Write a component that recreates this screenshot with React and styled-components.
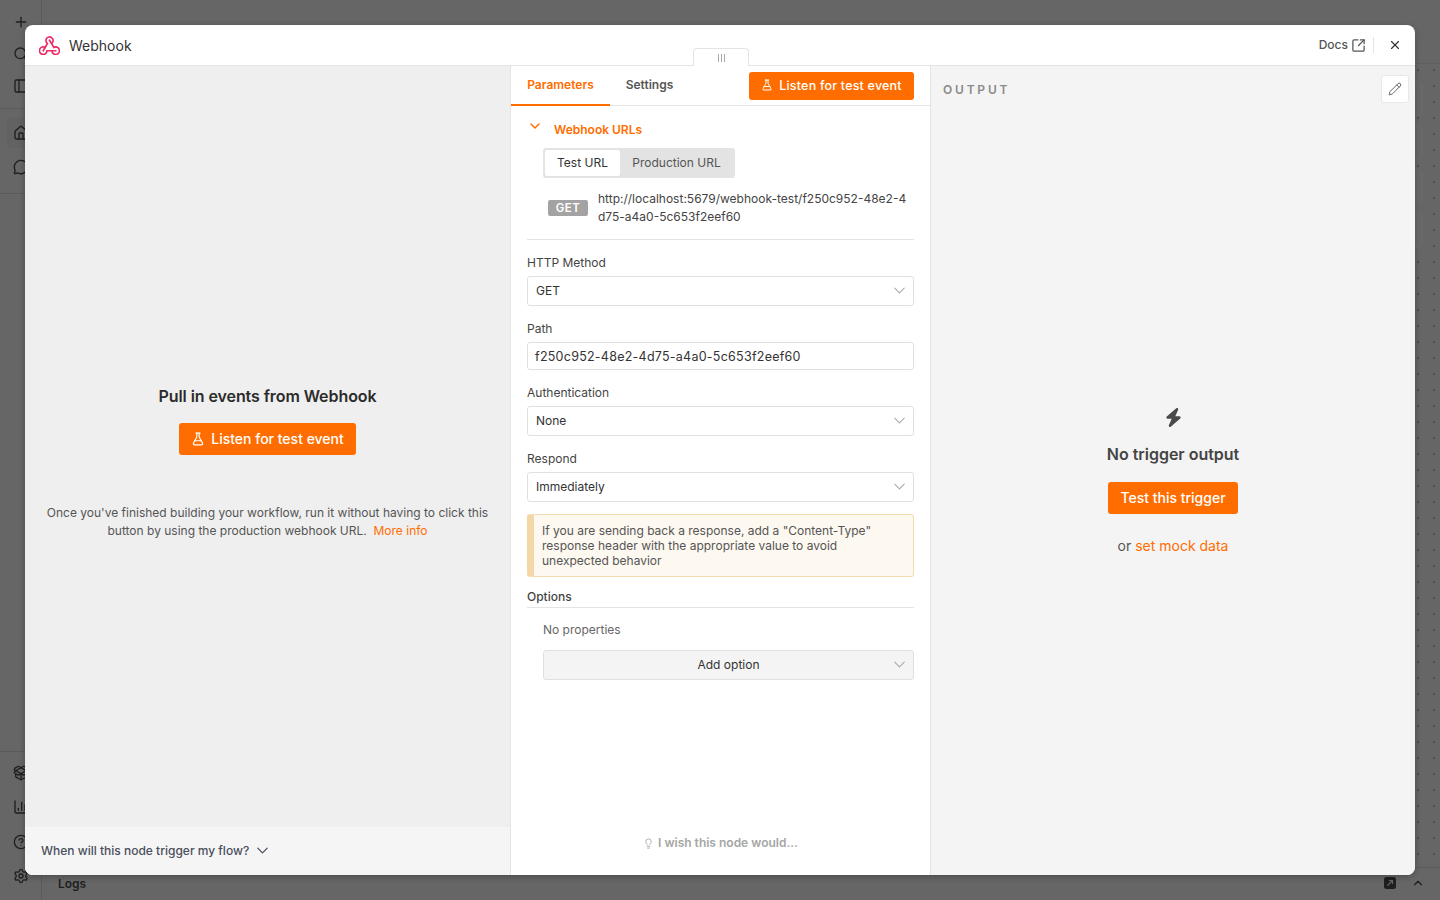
import React from 'react';
import styled, { createGlobalStyle } from 'styled-components';
import {
  FlaskConical, SquareArrowOutUpRight, X, Pencil, ChevronDown, ChevronUp, Lightbulb,
  Plus, Search, PanelLeft, House, MessageCircle, PackageOpen, ChartColumn, CircleHelp, Settings,
} from 'lucide-react';
import { FaBolt } from 'react-icons/fa6';

const GlobalStyle = createGlobalStyle`
  * { box-sizing: border-box; }
  html, body { margin: 0; height: 100%; }
  body { font-family: Inter, "Liberation Sans", sans-serif; background: #666; color: #333; overflow: hidden; }
`;

const ORANGE = '#ff6d00';

const Page = styled.div`
  width: 1440px;
  height: 900px;
  display: flex;
  background: #666;
  position: relative;
  overflow: hidden;
`;

const Sidebar = styled.div`
  width: 42px;
  display: flex;
  flex-direction: column;
  border-right: 1px solid #5a5a5a;
  color: #1f1f1f;
`;

const SideGroup = styled.div`
  display: flex;
  flex-direction: column;
  align-items: center;
  gap: ${p => p.$gap || 16}px;
  padding: ${p => p.$pad || '0'};
  border-bottom: ${p => p.$line ? '1px solid #5a5a5a' : 'none'};
  border-top: ${p => p.$lineTop ? '1px solid #5a5a5a' : 'none'};
`;

const HomeItem = styled.div`
  width: 28px;
  height: 31px;
  margin: -8px 0;
  display: flex;
  align-items: center;
  justify-content: center;
  border-radius: 4px;
  background: #626262;
`;

const Spacer = styled.div`
  flex: 1;
`;

const Canvas = styled.div`
  flex: 1;
  display: flex;
  flex-direction: column;
`;

const TopBar = styled.div`
  height: 64px;
  flex: none;
  border-bottom: 1px solid #5f5f5f;
`;

const CanvasDots = styled.div`
  flex: 1;
  display: flex;
  flex-direction: column;
  align-items: flex-end;
  gap: 9px;
  padding: 17px 17px 0 0;
  background-image: radial-gradient(#4f4f4f 0.8px, transparent 1px);
  background-size: 16px 16px;
  background-position: -8px -2px;
`;

const GhostCard = styled.div`
  width: 40px;
  height: 35px;
  border-radius: 6px;
  background: #686868;
  border: 1px solid #6c6c6c;
`;

const LogsBar = styled.div`
  height: 33px;
  flex: none;
  display: flex;
  align-items: center;
  justify-content: space-between;
  padding: 0 15px 2px 16px;
  border-top: 1px solid #5a5a5a;
  font-size: 12px;
  font-weight: 600;
  color: #1f1f1f;
`;

const LogsActions = styled.div`
  display: flex;
  align-items: center;
  gap: 14px;
`;

const Modal = styled.div`
  position: absolute;
  left: 25px;
  top: 25px;
  width: 1390px;
  height: 850px;
  background: #fff;
  border-radius: 8px;
  display: flex;
  flex-direction: column;
  overflow: hidden;
  box-shadow: 0 2px 6px rgba(0, 0, 0, 0.25);
`;

const Header = styled.div`
  height: 41px;
  flex: none;
  display: flex;
  align-items: center;
  justify-content: space-between;
  padding: 0 13px 0 14px;
  border-bottom: 1px solid #e4e4e4;
  position: relative;
`;

const Title = styled.div`
  display: flex;
  align-items: center;
  gap: 9px;
  font-size: 14px;
  color: #333;
`;

const HeaderActions = styled.div`
  display: flex;
  align-items: center;
  font-size: 12px;
  font-weight: 500;
  color: #555;
`;

const Docs = styled.span`
  display: flex;
  align-items: center;
  gap: 3px;
  padding-right: 7px;
  border-right: 1px solid #e4e4e4;
  height: 16px;
  line-height: 14px;
`;

const CloseBtn = styled.span`
  display: flex;
  margin-left: 14px;
  color: #333;
`;

const DragHandle = styled.div`
  position: absolute;
  left: 668px;
  top: 23px;
  width: 56px;
  height: 18px;
  background: #fff;
  border: 1px solid #e4e4e4;
  border-bottom: none;
  border-radius: 4px 4px 0 0;
  display: flex;
  align-items: center;
  justify-content: center;
  gap: 2px;
`;

const HandleBar = styled.span`
  width: 1px;
  height: 8px;
  background: #a8a8a8;
`;

const Body = styled.div`
  flex: 1;
  min-height: 0;
  display: flex;
`;

const LeftPanel = styled.div`
  width: 485px;
  flex: none;
  display: flex;
  flex-direction: column;
  background: #efefef;
`;

const LeftMain = styled.div`
  flex: 1;
  display: flex;
  flex-direction: column;
  align-items: center;
  padding-top: 320px;
`;

const LeftTitle = styled.div`
  font-size: 16px;
  font-weight: 600;
  line-height: 20px;
  letter-spacing: -0.08px;
  color: #2b2b2b;
`;

const OrangeButton = styled.button`
  display: inline-flex;
  align-items: center;
  justify-content: center;
  gap: ${p => p.$gap || 6}px;
  height: ${p => p.$h || 32}px;
  width: ${p => p.$w}px;
  margin-top: ${p => p.$top || 0}px;
  padding: 0 0 ${p => p.$lift || 0}px;
  border: none;
  border-radius: 3px;
  background: ${ORANGE};
  color: #fff;
  font-family: inherit;
  font-size: ${p => p.$size || 14}px;
  font-weight: 500;
  letter-spacing: ${p => p.$track || 0}px;
`;

const LeftHint = styled.div`
  width: 460px;
  margin-top: 49px;
  text-align: center;
  font-size: 12px;
  line-height: 18px;
  color: #555;
`;

const Link = styled.span`
  color: ${ORANGE};
`;

const LeftFooter = styled.div`
  height: 48px;
  flex: none;
  display: flex;
  align-items: center;
  gap: 4px;
  padding: 0 0 1px 16px;
  background: #f5f5f5;
  font-size: 12px;
  font-weight: 500;
  color: #4a4f5c;
`;

const MiddlePanel = styled.div`
  width: 421px;
  flex: none;
  display: flex;
  flex-direction: column;
  border-left: 1px solid #e4e4e4;
  border-right: 1px solid #e4e4e4;
  background: #fff;
`;

const TabsRow = styled.div`
  height: 40px;
  flex: none;
  display: flex;
  justify-content: space-between;
  border-bottom: 1px solid #e4e4e4;
  padding-right: 16px;
`;

const Tabs = styled.div`
  display: flex;
`;

const Tab = styled.div`
  width: ${p => p.$w}px;
  height: 40px;
  padding-top: 12px;
  text-align: center;
  font-size: 12px;
  font-weight: 600;
  line-height: 14px;
  color: ${p => p.$active ? ORANGE : '#555'};
  border-bottom: ${p => p.$active ? `2px solid ${ORANGE}` : 'none'};
`;

const TabAction = styled.div`
  padding-top: 6px;
`;

const Form = styled.div`
  flex: 1;
  display: flex;
  flex-direction: column;
  padding: 0 16px;
`;

const CollectionHead = styled.div`
  display: flex;
  align-items: flex-start;
  gap: 11px;
  height: 42px;
  padding-top: 15px;
  font-size: 12px;
  font-weight: 600;
  line-height: 18px;
  color: ${ORANGE};
`;

const Segments = styled.div`
  display: inline-flex;
  align-self: flex-start;
  margin-left: 16px;
  height: 30px;
  padding: 2px;
  border-radius: 3px;
  background: #e3e3e3;
  font-size: 12px;
  color: #555;
`;

const Segment = styled.div`
  width: ${p => p.$w}px;
  display: flex;
  align-items: center;
  justify-content: center;
  padding-bottom: 1px;
  border-radius: 2px;
  background: ${p => p.$on ? '#fff' : 'transparent'};
  color: ${p => p.$on ? '#333' : '#555'};
`;

const UrlRow = styled.div`
  display: flex;
  align-items: center;
  gap: 10px;
  margin-top: 12px;
  padding: 0 7px 13px 21px;
  border-bottom: 1px solid #e4e4e4;
`;

const MethodTag = styled.span`
  flex: none;
  width: 40px;
  height: 16px;
  margin-bottom: 1px;
  border-radius: 2px;
  background: #a3a3a3;
  color: #fff;
  text-align: center;
  font-size: 11.5px;
  font-weight: 600;
  line-height: 16px;
  letter-spacing: 0.4px;
`;

const UrlText = styled.div`
  font-size: 12px;
  line-height: 18px;
  color: #444;
  word-break: break-all;
`;

const Label = styled.div`
  margin-top: ${p => p.$top}px;
  margin-bottom: ${p => p.$bottom || 5}px;
  font-size: 12px;
  font-weight: 400;
  line-height: 16px;
  color: #444;
`;

const Select = styled.div`
  height: 30px;
  display: flex;
  align-items: center;
  justify-content: ${p => p.$center ? 'center' : 'space-between'};
  position: relative;
  padding: 0 4px 1px ${p => p.$center ? 4 : 8}px;
  border: 1px solid #e0e0e0;
  border-radius: 3px;
  background: ${p => p.$muted ? '#f4f4f4' : '#fff'};
  font-size: 12px;
  color: #333;
  margin-left: ${p => p.$indent || 0}px;
`;

const SelectArrow = styled.span`
  display: flex;
  color: #a8a8a8;
  ${p => p.$over && 'position: absolute; right: 4px; top: 4px;'}
`;

const PathInput = styled.div`
  height: 28px;
  display: flex;
  align-items: center;
  padding: 0 7px;
  border: 1px solid #e0e0e0;
  border-radius: 3px;
  font-size: 12.5px;
  color: #333;
  letter-spacing: 0.25px;
`;

const Notice = styled.div`
  margin-top: 12px;
  height: 63px;
  padding: 8px 14px 0 8px;
  border: 1px solid #f4dcb0;
  border-left: 7px solid #f4d7a6;
  border-radius: 3px;
  background: #fdf8f0;
  font-size: 12px;
  line-height: 15px;
  color: #555;
`;

const OptionsLabel = styled.div`
  margin-top: 12px;
  height: 19px;
  border-bottom: 1px solid #e4e4e4;
  font-size: 12px;
  font-weight: 500;
  line-height: 15px;
  color: #444;
`;

const Muted = styled.div`
  margin: 14px 0 12px 16px;
  font-size: 12px;
  line-height: 16px;
  color: #666;
`;

const Wish = styled.div`
  height: 45px;
  flex: none;
  display: flex;
  align-items: flex-start;
  justify-content: center;
  gap: 4px;
  padding-top: 5px;
  font-size: 12px;
  font-weight: 600;
  line-height: 16px;
  color: #a6a6a6;
`;

const RightPanel = styled.div`
  flex: 1;
  display: flex;
  flex-direction: column;
  align-items: center;
  position: relative;
  background: #f4f4f4;
`;

const OutputLabel = styled.div`
  align-self: flex-start;
  margin: 17px 0 0 12px;
  height: 14px;
  font-size: 12px;
  font-weight: 600;
  line-height: 14px;
  letter-spacing: 2.8px;
  color: #8a8a8a;
`;

const PencilBtn = styled.div`
  position: absolute;
  top: 9px;
  right: 6px;
  width: 28px;
  height: 28px;
  display: flex;
  align-items: center;
  justify-content: center;
  background: #fff;
  border: 1px solid #e8e8e8;
  border-radius: 3px;
  color: #444;
`;

const BoltIcon = styled.div`
  margin-top: 311px;
  height: 22px;
  display: flex;
  color: #4a4a4a;
`;

const NoOutput = styled.div`
  margin-top: 14px;
  font-size: 16px;
  font-weight: 600;
  line-height: 20px;
  letter-spacing: -0.02px;
  color: #444;
`;

const MockLine = styled.div`
  margin-top: 23px;
  font-size: 14px;
  line-height: 18px;
  color: #555;
`;

const WebhookLogo = () => (
  <svg width="21" height="19" viewBox="0 0 20 18" fill="none" stroke="#ef2b67" strokeWidth="1.6" strokeLinecap="round">
    <path d="M12.6 6.5A3.4 3.4 0 1 0 8 7L4 14" />
    <path d="M6 10.9A3.6 3.6 0 1 0 7.6 14H16" />
    <path d="M12.4 14.9A3.6 3.6 0 1 0 14.2 10.8L10 4" />
  </svg>
);

const LogsPopout = () => (
  <svg width="14" height="14" viewBox="0 0 14 14">
    <rect x="1" y="1" width="12" height="12" rx="2.5" fill="#1f1f1f" />
    <path d="M4.5 9.5L9.5 4.5M6 4.5h3.5V8" fill="none" stroke="#666" strokeWidth="1.2" />
  </svg>
);

const Chevron = () => <ChevronDown size={19} strokeWidth={1.3} />;

export default function App() {
  return (
    <Page>
      <GlobalStyle />
      <Sidebar>
        <SideGroup $pad="14px 0 14px" $gap={16} $line>
          <Plus size={16} />
          <Search size={16} />
          <PanelLeft size={16} />
        </SideGroup>
        <SideGroup $pad="16px 0 18px" $gap={19} $line>
          <HomeItem><House size={16} /></HomeItem>
          <MessageCircle size={16} />
        </SideGroup>
        <Spacer />
        <SideGroup $pad="13px 0 16px" $gap={18.5} $lineTop>
          <PackageOpen size={16} />
          <ChartColumn size={16} />
          <CircleHelp size={16} />
          <Settings size={16} />
        </SideGroup>
      </Sidebar>
      <Canvas>
        <TopBar />
        <CanvasDots>
          <GhostCard />
          <GhostCard />
          <GhostCard />
          <GhostCard />
        </CanvasDots>
        <LogsBar>
          Logs
          <LogsActions>
            <LogsPopout />
            <ChevronUp size={14} />
          </LogsActions>
        </LogsBar>
      </Canvas>

      <Modal>
        <Header>
          <Title>
            <WebhookLogo />
            Webhook
          </Title>
          <HeaderActions>
            <Docs>Docs <SquareArrowOutUpRight size={15} strokeWidth={2} /></Docs>
            <CloseBtn><X size={14} /></CloseBtn>
          </HeaderActions>
          <DragHandle>
            <HandleBar /><HandleBar /><HandleBar />
          </DragHandle>
        </Header>
        <Body>
          <LeftPanel>
            <LeftMain>
              <LeftTitle>Pull in events from Webhook</LeftTitle>
              <OrangeButton $w={177} $top={17} $lift={1}>
                <FlaskConical size={14} /> Listen for test event
              </OrangeButton>
              <LeftHint>
                Once you've finished building your workflow, run it without having to click this button by using the production webhook URL.&nbsp; <Link>More info</Link>
              </LeftHint>
            </LeftMain>
            <LeftFooter>
              When will this node trigger my flow? <ChevronDown size={19} strokeWidth={1.6} />
            </LeftFooter>
          </LeftPanel>

          <MiddlePanel>
            <TabsRow>
              <Tabs>
                <Tab $w={99} $active>Parameters</Tab>
                <Tab $w={79}>Settings</Tab>
              </Tabs>
              <TabAction>
                <OrangeButton $w={165} $h={28} $size={12.5} $track={0.2} $lift={2}>
                  <FlaskConical size={12} /> Listen for test event
                </OrangeButton>
              </TabAction>
            </TabsRow>
            <Form>
              <CollectionHead>
                <ChevronDown size={16} strokeWidth={2.2} style={{ marginTop: -3 }} />
                Webhook URLs
              </CollectionHead>
              <Segments>
                <Segment $w={75} $on>Test URL</Segment>
                <Segment $w={113}>Production URL</Segment>
              </Segments>
              <UrlRow>
                <MethodTag>GET</MethodTag>
                <UrlText>http://localhost:5679/webhook-test/f250c952-48e2-4d75-a4a0-5c653f2eef60</UrlText>
              </UrlRow>
              <Label $top={15}>HTTP Method</Label>
              <Select>GET <SelectArrow><Chevron /></SelectArrow></Select>
              <Label $top={15}>Path</Label>
              <PathInput>f250c952-48e2-4d75-a4a0-5c653f2eef60</PathInput>
              <Label $top={15}>Authentication</Label>
              <Select>None <SelectArrow><Chevron /></SelectArrow></Select>
              <Label $top={15}>Respond</Label>
              <Select>Immediately <SelectArrow><Chevron /></SelectArrow></Select>
              <Notice>If you are sending back a response, add a "Content-Type" response header with the appropriate value to avoid unexpected behavior</Notice>
              <OptionsLabel>Options</OptionsLabel>
              <Muted>No properties</Muted>
              <Select $center $muted $indent={16}>
                Add option
                <SelectArrow $over><Chevron /></SelectArrow>
              </Select>
              <Spacer />
            </Form>
            <Wish><Lightbulb size={11} style={{ marginTop: 3 }} /> I wish this node would...</Wish>
          </MiddlePanel>

          <RightPanel>
            <OutputLabel>OUTPUT</OutputLabel>
            <PencilBtn><Pencil size={14} strokeWidth={1.4} /></PencilBtn>
            <BoltIcon><FaBolt size={19} /></BoltIcon>
            <NoOutput>No trigger output</NoOutput>
            <OrangeButton $w={130} $top={18} $lift={1}>Test this trigger</OrangeButton>
            <MockLine>or <Link>set mock data</Link></MockLine>
          </RightPanel>
        </Body>
      </Modal>
    </Page>
  );
}
